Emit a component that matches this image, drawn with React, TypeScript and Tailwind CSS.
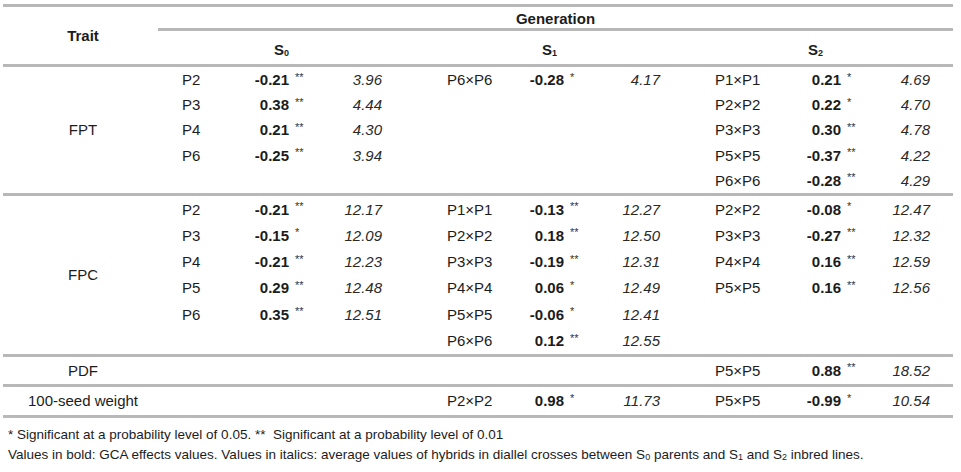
import React from "react";

type Cell = { cross: string; v: string; sig: string; mean: string };

const FONT = { fontFamily: '"Liberation Sans", Arial, sans-serif' };

function Sub({ s, n }: { s: string; n: string }) {
  return (
    <span>
      {s}
      <sub className="text-[9px] relative -bottom-[1px]">{n}</sub>
    </span>
  );
}

// column layouts per generation group
const GROUPS = [
  { w: "w-[219px]", cols: "grid-cols-[76px_50px_31px_62px]", pl: "pl-[19px]" },
  { w: "w-[278px]", cols: "grid-cols-[132px_50px_32px_64px]", pl: "pl-[65px]" },
  { w: "w-[293px]", cols: "grid-cols-[131px_50px_30px_59px_23px]", pl: "pl-[55px]" },
];

function Group({ gi, rows, rowH }: { gi: number; rows: Cell[]; rowH: string }) {
  const g = GROUPS[gi];
  return (
    <div className={`${g.w} flex flex-col`}>
      {rows.map((r) => (
        <div key={r.cross} className={`grid ${g.cols} ${rowH} items-center`}>
          <span className={g.pl}>{r.cross}</span>
          <span className="text-right font-bold">{r.v}</span>
          <span className="self-center -mt-[5px] pl-[6px] text-[11px] leading-none text-[#333]">{r.sig}</span>
          <span className="text-right italic text-[#2a2a2a]">{r.mean}</span>
        </div>
      ))}
    </div>
  );
}

const c = (cross: string, v: string, sig: string, mean: string): Cell => ({ cross, v, sig, mean });

const sections: { trait: string; rowH: string; g: Cell[][] }[] = [
  {
    trait: "FPT",
    rowH: "h-[25.2px]",
    g: [
      [c("P2", "-0.21", "**", "3.96"), c("P3", "0.38", "**", "4.44"), c("P4", "0.21", "**", "4.30"), c("P6", "-0.25", "**", "3.94")],
      [c("P6×P6", "-0.28", "*", "4.17")],
      [
        c("P1×P1", "0.21", "*", "4.69"),
        c("P2×P2", "0.22", "*", "4.70"),
        c("P3×P3", "0.30", "**", "4.78"),
        c("P5×P5", "-0.37", "**", "4.22"),
        c("P6×P6", "-0.28", "**", "4.29"),
      ],
    ],
  },
  {
    trait: "FPC",
    rowH: "h-[26.3px]",
    g: [
      [
        c("P2", "-0.21", "**", "12.17"),
        c("P3", "-0.15", "*", "12.09"),
        c("P4", "-0.21", "**", "12.23"),
        c("P5", "0.29", "**", "12.48"),
        c("P6", "0.35", "**", "12.51"),
      ],
      [
        c("P1×P1", "-0.13", "**", "12.27"),
        c("P2×P2", "0.18", "**", "12.50"),
        c("P3×P3", "-0.19", "**", "12.31"),
        c("P4×P4", "0.06", "*", "12.49"),
        c("P5×P5", "-0.06", "*", "12.41"),
        c("P6×P6", "0.12", "**", "12.55"),
      ],
      [
        c("P2×P2", "-0.08", "*", "12.47"),
        c("P3×P3", "-0.27", "**", "12.32"),
        c("P4×P4", "0.16", "**", "12.59"),
        c("P5×P5", "0.16", "**", "12.56"),
      ],
    ],
  },
  {
    trait: "PDF",
    rowH: "h-[27px]",
    g: [[], [], [c("P5×P5", "0.88", "**", "18.52")]],
  },
  {
    trait: "100-seed weight",
    rowH: "h-[28px]",
    g: [[], [c("P2×P2", "0.98", "*", "11.73")], [c("P5×P5", "-0.99", "*", "10.54")]],
  },
];

export default function App() {
  return (
    <div className="w-[961px] h-[472px] bg-white text-[#1c1c1c] text-[15px] leading-none" style={FONT}>
      <div className="ml-[3px] w-[950px] pt-[4px]">
        {/* header */}
        <div className="flex border-t-[3px] border-b-[3px] border-[#b8b8b8]">
          <div className="w-[155px] flex items-center justify-center font-bold pl-[5px]">Trait</div>
          <div className="flex-1 flex flex-col">
            <div className="h-[24px] flex items-center justify-center font-bold border-b-[3px] border-[#b8b8b8] pt-[1px]">
              Generation
            </div>
            <div className="h-[33px] flex items-center font-bold pt-[3px]">
              <div className="w-[224px] pl-[116px]">
                <Sub s="S" n="0" />
              </div>
              <div className="w-[278px] pl-[160px]">
                <Sub s="S" n="1" />
              </div>
              <div className="w-[293px] pl-[148px]">
                <Sub s="S" n="2" />
              </div>
            </div>
          </div>
        </div>

        {sections.map((s) => (
          <div key={s.trait} className="flex border-b-[3px] border-[#b8b8b8]">
            <div className="w-[160px] flex items-center justify-center">{s.trait}</div>
            {s.g.map((rows, gi) => (
              <Group key={gi} gi={gi} rows={rows} rowH={s.rowH} />
            ))}
          </div>
        ))}

        {/* footnotes */}
        <div className="pl-[5px] pt-[7px] text-[13.5px] leading-[20px] text-[#1c1c1c]">
          <p>* Significant at a probability level of 0.05. **&nbsp; Significant at a probability level of 0.01</p>
          <p>
            Values in bold: GCA effects values. Values in italics: average values of hybrids in diallel crosses between{" "}
            <Sub s="S" n="0" /> parents and <Sub s="S" n="1" /> and <Sub s="S" n="2" /> inbred lines.
          </p>
        </div>
      </div>
    </div>
  );
}
